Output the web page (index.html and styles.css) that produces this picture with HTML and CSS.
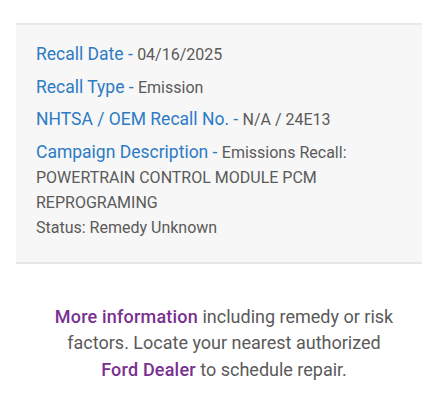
FILE: index.html
```html
<!DOCTYPE html>
<html>
<head>
<meta charset="utf-8">
<link rel="stylesheet" href="styles.css">
</head>
<body>
<div class="page">
  <div class="card">
    <p class="row"><span class="label">Recall Date - </span><span class="value">04/16/2025</span></p>
    <p class="row"><span class="label">Recall Type - </span><span class="value">Emission</span></p>
    <p class="row"><span class="label">NHTSA / OEM Recall No. - </span><span class="value">N/A / 24E13</span></p>
    <p class="row desc"><span class="label">Campaign Description - </span><span class="value">Emissions Recall: POWERTRAIN CONTROL MODULE PCM REPROGRAMING<br>Status: Remedy Unknown</span></p>
  </div>
  <p class="info"><a class="link" href="#">More information</a> including remedy or risk factors. Locate your nearest authorized <a class="link" href="#">Ford Dealer</a> to schedule repair.</p>
</div>
</body>
</html>
```
FILE: styles.css
```css
html, body { margin: 0; padding: 0; background: #fff; }
body { font-family: Roboto, "Noto Sans", sans-serif; }
.page { padding-top: 23px; }
.card {
  margin-left: 16px;
  background: #f7f7f7;
  border-top: 2px solid #e9e9e9;
  border-bottom: 2px solid #e6e6e6;
  padding: 17px 20px 22px 20px;
}
.row { margin: 0 0 7.5px 0; line-height: 25px; }
.row:last-child { margin-bottom: 0; }
.label { color: #2c7bc4; font-size: 17.5px; }
.value { color: #5a5a5a; font-size: 16px; }
.info {
  margin: 40px 26px 0 52px;
  text-align: center;
  color: #5a5a5a;
  font-size: 18px;
  line-height: 26.5px;
}
.link { color: #7a3090; font-weight: 500; letter-spacing: 0.2px; text-decoration: none; }
```
